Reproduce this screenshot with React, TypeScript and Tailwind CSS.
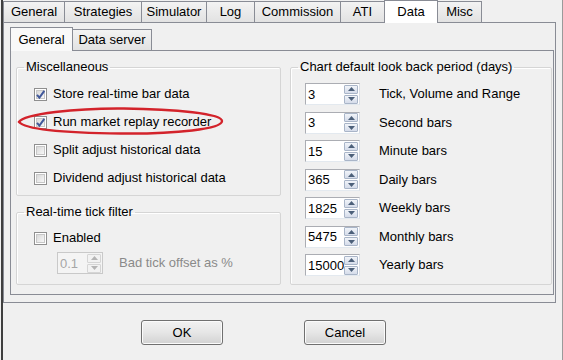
import React from 'react';

const topTabs = [
  { label: 'General', w: 'w-[62px]' },
  { label: 'Strategies', w: 'w-[78px]' },
  { label: 'Simulator', w: 'w-[66px]' },
  { label: 'Log', w: 'w-[49px]' },
  { label: 'Commission', w: 'w-[87px]' },
  { label: 'ATI', w: 'w-[45px]' },
  { label: 'Data', w: 'w-[54px]', active: true },
  { label: 'Misc', w: 'w-[45px]' },
];

const lookBack = [
  { value: '3', label: 'Tick, Volume and Range' },
  { value: '3', label: 'Second bars' },
  { value: '15', label: 'Minute bars' },
  { value: '365', label: 'Daily bars' },
  { value: '1825', label: 'Weekly bars' },
  { value: '5475', label: 'Monthly bars' },
  { value: '15000', label: 'Yearly bars' },
];

function Checkbox({ checked }: { checked?: boolean }) {
  return (
    <div className="relative w-[13px] h-[13px] shrink-0 border border-[#8f8f8f] bg-white p-px">
      <div className="w-full h-full bg-gradient-to-br from-[#d9d9d9] to-[#f7f7f7] border border-[#c7c7c7]" />
      {checked && (
        <svg className="absolute left-0 top-0" width="11" height="11" viewBox="0 0 11 11">
          <path d="M2 5.8 L4.4 8.6 L9.3 1.8" fill="none" stroke="#41589a" strokeWidth="2" />
        </svg>
      )}
    </div>
  );
}

function Spinner({ value, width = 'w-[55px]', disabled }: { value: string; width?: string; disabled?: boolean }) {
  const arrow = disabled ? '#b4b4b4' : '#4c607a';
  const btn = disabled
    ? 'border-[#d5d5d5] bg-[#f2f2f2]'
    : 'border-[#a9b5c8] bg-gradient-to-b from-[#f1f4f9] to-[#d5dcea]';
  return (
    <div
      className={`${width} h-[22px] flex items-center border ${
        disabled
          ? 'border-[#c9c9c9] bg-[#f4f4f4] text-[#a6a6a6]'
          : 'border-[#abadb3] border-r-[#dbdfe6] border-b-[#e3e9ef] bg-white text-black'
      }`}
    >
      <span className="flex-1 pl-[2px] leading-none">{value}</span>
      <div className="flex flex-col w-[14px] h-[19px] mr-px gap-px">
        <div className={`flex-1 flex items-center justify-center border rounded-[1px] ${btn}`}>
          <svg width="7" height="4" viewBox="0 0 7 4"><path d="M0 4 L3.5 0 L7 4 Z" fill={arrow} /></svg>
        </div>
        <div className={`flex-1 flex items-center justify-center border rounded-[1px] ${btn}`}>
          <svg width="7" height="4" viewBox="0 0 7 4"><path d="M0 0 L3.5 4 L7 0 Z" fill={arrow} /></svg>
        </div>
      </div>
    </div>
  );
}

function Group({ title, className, children }: { title: string; className: string; children: React.ReactNode }) {
  return (
    <fieldset className={`${className} border border-[#d5d5d5] rounded-[2px] shadow-[inset_1px_1px_0_#ffffff]`}>
      <legend className="ml-[7px] px-[2px] leading-[16px]">{title}</legend>
      {children}
    </fieldset>
  );
}

export default function App() {
  return (
    <div className="relative w-[563px] h-[360px] overflow-hidden bg-[#f0f0f0] text-[13px] text-black font-['Liberation_Sans',Arial,sans-serif]">
      <div className="ml-px h-full border-l-2 border-r border-l-[#3f3f3f] border-r-[#9a9a9a] flex flex-col">
        {/* Top tab strip */}
        <div className="relative z-10 flex items-end h-[23px] -mb-px">
          {topTabs.map((t) =>
            t.active ? (
              <div key={t.label} className={`${t.w} -ml-px h-[23px] flex items-center justify-center bg-white border border-b-0 border-[#898c95]`}>
                {t.label}
              </div>
            ) : (
              <div
                key={t.label}
                className={`${t.w} -ml-px first:ml-0 mb-px h-[21px] flex items-center justify-center border border-b-0 border-[#898c95] bg-gradient-to-b from-[#f3f3f3] to-[#e2e2e2]`}
              >
                {t.label}
              </div>
            )
          )}
        </div>

        {/* Outer panel */}
        <div className="w-[553px] h-[281px] border border-[#898c95] bg-[#f0f0f0] pl-[6px] pt-[4px]">
          {/* Inner tab strip */}
          <div className="relative z-10 flex items-end h-[24px] -mb-px">
            <div className="w-[63px] h-[24px] flex items-center justify-center bg-[#f9f9f9] border border-b-0 border-[#898c95]">
              General
            </div>
            <div className="w-[80px] -ml-px mb-px h-[21px] flex items-center justify-center border border-b-0 border-[#898c95] bg-gradient-to-b from-[#f3f3f3] to-[#e2e2e2]">
              Data server
            </div>
          </div>

          {/* Inner panel */}
          <div className="w-[544px] h-[245px] border border-[#898c95] bg-[#f0f0f0] pl-[5px] pt-[8px] flex gap-[9px]">
            <div className="w-[265px] flex flex-col gap-[8px]">
              <Group title="Miscellaneous" className="h-[137px]">
                <div className="mt-[5px] pl-[17px] flex flex-col">
                  {[
                    { label: 'Store real-time bar data', checked: true },
                    { label: 'Run market replay recorder', checked: true },
                    { label: 'Split adjust historical data' },
                    { label: 'Dividend adjust historical data' },
                  ].map((c) => (
                    <div key={c.label} className="h-[28px] flex items-center gap-[6px]">
                      <Checkbox checked={c.checked} />
                      <span>{c.label}</span>
                    </div>
                  ))}
                </div>
              </Group>

              <Group title="Real-time tick filter" className="h-[81px]">
                <div className="pl-[17px]">
                  <div className="mt-[8px] h-[20px] flex items-center gap-[6px]">
                    <Checkbox />
                    <span>Enabled</span>
                  </div>
                  <div className="mt-[4px] ml-[23px] flex items-center gap-[16px]">
                    <Spinner value="0.1" width="w-[46px]" disabled />
                    <span className="text-[#8a8a8a]">Bad tick offset as %</span>
                  </div>
                </div>
              </Group>
            </div>

            <Group title="Chart default look back period (days)" className="w-[262px] h-[226px]">
              <div className="mt-[8px] pl-[14px] flex flex-col gap-[6.5px]">
                {lookBack.map((r) => (
                  <div key={r.label} className="flex items-center gap-[19px]">
                    <Spinner value={r.value} />
                    <span>{r.label}</span>
                  </div>
                ))}
              </div>
            </Group>
          </div>
        </div>

        {/* Dialog buttons */}
        <div className="mt-[17px] ml-[138px] flex gap-[81px]">
          <button className="w-[82px] h-[25px] rounded-[3px] border border-[#707070] bg-gradient-to-b from-[#f2f2f2] via-[#e6e6e6] to-[#d2d2d2] shadow-[inset_0_0_0_1px_#fbfbfb]">
            OK
          </button>
          <button className="w-[82px] h-[25px] rounded-[3px] border border-[#707070] bg-gradient-to-b from-[#f2f2f2] via-[#e6e6e6] to-[#d2d2d2] shadow-[inset_0_0_0_1px_#fbfbfb]">
            Cancel
          </button>
        </div>
      </div>

      {/* Red highlight ellipse */}
      <svg className="absolute left-[16px] top-[106px] pointer-events-none" width="210" height="30" viewBox="0 0 210 30">
        <path
          d="M3 16 C 8 8, 60 2, 108 2.5 C 160 3, 206 8, 206 15 C 206 23, 160 28, 105 27.5 C 55 27, 10 24, 3 16 Z"
          fill="none"
          stroke="#d3232b"
          strokeWidth="2.4"
        />
      </svg>
    </div>
  );
}
